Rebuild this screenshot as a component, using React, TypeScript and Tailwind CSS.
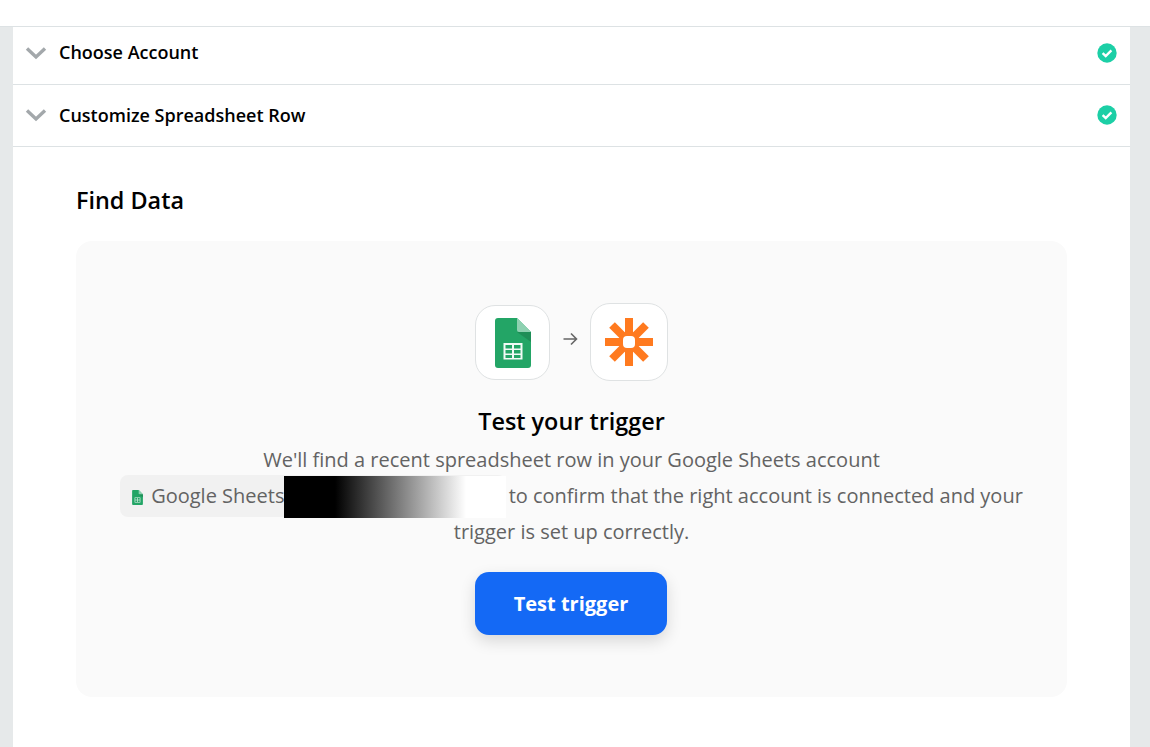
import React from "react";

const font = { fontFamily: '"Open Sans", sans-serif' };

const Chevron = () => (
  <svg width="22" height="14" viewBox="0 0 22 14" fill="none" className="shrink-0">
    <path d="M2 2.5 L11 11 L20 2.5" stroke="#a3a8ab" strokeWidth="3.4" />
  </svg>
);

const Check = () => (
  <svg width="20" height="20" viewBox="0 0 20 20" className="shrink-0">
    <circle cx="10" cy="10" r="9.7" fill="#1ccfa6" />
    <path d="M5.6 10.2 L8.7 13 L14.4 7.4" stroke="#fff" strokeWidth="2.4" fill="none" />
  </svg>
);

const SheetsIcon = ({ w, h, className }: { w: number; h: number; className?: string }) => (
  <svg width={w} height={h} viewBox="0 0 36 50" className={className}>
    <path d="M3 0 H22 L36 14 V47 a3 3 0 0 1 -3 3 H3 a3 3 0 0 1 -3 -3 V3 a3 3 0 0 1 3 -3 Z" fill="#23a566" />
    <path d="M22 14 H36 V24 Z" fill="#1e8e57" />
    <path d="M22 0 L36 14 H24 a2 2 0 0 1 -2 -2 Z" fill="#8ed1b1" />
    <path
      d="M8.5 25 H27.5 V41.5 H8.5 Z M10.5 27 V30.5 H17 V27 Z M19 27 V30.5 H25.5 V27 Z M10.5 32 V35.5 H17 V32 Z M19 32 V35.5 H25.5 V32 Z M10.5 37 V40 H17 V37 Z M19 37 V40 H25.5 V37 Z"
      fill="#f1faf5"
      fillRule="evenodd"
    />
  </svg>
);

const ZapierIcon = () => (
  <svg width="48" height="48" viewBox="0 0 48 48">
    <g fill="#ff7a1f">
      <rect x="20" y="0" width="8" height="48" />
      <rect x="0" y="20" width="48" height="8" />
      <rect x="20" y="0" width="8" height="48" transform="rotate(45 24 24)" />
      <rect x="20" y="0" width="8" height="48" transform="rotate(-45 24 24)" />
      <circle cx="24" cy="24" r="10.5" />
    </g>
    <rect x="18" y="18" width="12" height="12" rx="4" fill="#fff" />
  </svg>
);

const Row = ({ title, h }: { title: string; h: string }) => (
  <div className={`flex items-center border-b border-[#dde2e4] pl-[12px] pr-[13px] ${h}`}>
    <Chevron />
    <span className="ml-[12px] text-[18px] font-semibold text-black">{title}</span>
    <span className="ml-auto">
      <Check />
    </span>
  </div>
);

export default function App() {
  return (
    <div className="flex h-[747px] w-[1150px] flex-col overflow-hidden bg-white" style={font}>
      <div className="box-content h-[26px] border-b border-[#dde2e4] bg-white" />
      <div className="flex flex-1 bg-[#e6e9ea]">
        <div className="ml-[13px] w-[1117px] bg-white">
          <Row title="Choose Account" h="h-[58px] pb-[6px]" />
          <Row title="Customize Spreadsheet Row" h="h-[62px] pb-[1px]" />
          <div className="pl-[63px] pr-[63px]">
            <h2 className="mt-[35px] text-[23.4px] leading-[36px] font-semibold text-black">Find Data</h2>
            <div className="mt-[23px] flex h-[456px] w-[991px] flex-col items-center rounded-2xl bg-[#fafafa] pt-[62px]">
              <div className="flex items-center">
                <div className="flex h-[75px] w-[75px] items-center justify-center rounded-[20px] border border-[#dfe2e3] bg-white pt-[1px]">
                  <SheetsIcon w={36} h={50} />
                </div>
                <svg width="40" height="16" viewBox="0 0 40 16" fill="none" className="mb-[6px]">
                  <path d="M13.5 8 H26.5 M21 2.5 L26.5 8 L21 13.5" stroke="#666" strokeWidth="1.6" />
                </svg>
                <div className="flex h-[78px] w-[78px] items-center justify-center rounded-[20px] border border-[#dfe2e3] bg-white">
                  <ZapierIcon />
                </div>
              </div>
              <h3 className="mt-[22px] text-[23.4px] leading-[36px] font-semibold text-black">Test your trigger</h3>
              <p className="mt-[3px] w-[930px] text-center text-[20px] leading-[36px] text-[#636363]">
                We'll find a recent spreadsheet row in your Google Sheets account{" "}
                <span className="-mt-[7px] -mr-[3px] -mb-[3px] inline-flex h-[42px] items-center rounded-lg bg-[#f1f1f1] pl-[12px] align-middle">
                  <SheetsIcon w={11} h={15} className="mt-[3px]" />
                  <span className="ml-[8px]">Google Sheets</span>
                  <span className="h-[42px] w-[222px] translate-y-[1px] bg-[linear-gradient(90deg,#000_0%,#000_23%,#fff_82%,#fff_100%)]" />
                </span>{" "}
                to confirm that the right account is connected and your trigger is set up correctly.
              </p>
              <button className="mt-[22px] mr-[1px] h-[63px] w-[192px] rounded-[14px] bg-[#1469f5] text-[20px] font-bold text-white shadow-[0_6px_16px_rgba(0,0,0,0.14)]">
                Test trigger
              </button>
            </div>
          </div>
        </div>
      </div>
    </div>
  );
}
